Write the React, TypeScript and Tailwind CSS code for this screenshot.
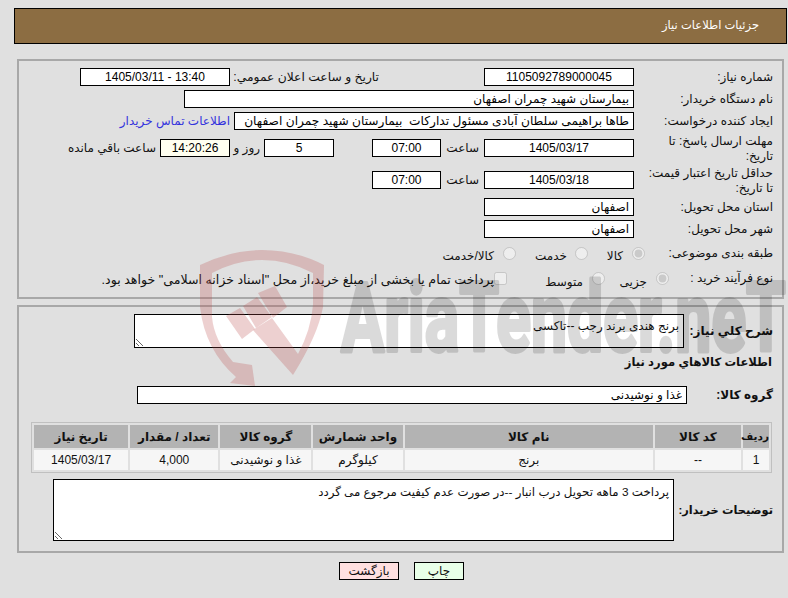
import React from 'react';

const boxClass = 'h-[18px] border border-black bg-white px-1 leading-[16px] text-black outline-none';

function Box({ value, width, center, bg, size = 'text-[12px]' }: { value: string; width: string; center?: boolean; bg?: string; size?: string }) {
  return (
    <input
      readOnly
      value={value}
      className={`${boxClass} ${size} ${width} ${center ? 'text-center' : 'text-right'} ${bg ?? ''} shrink-0`}
    />
  );
}

function Label({ children, width = 'w-[139px]', bold, nowrap, size }: { children: React.ReactNode; width?: string; bold?: boolean; nowrap?: boolean; size?: string }) {
  return (
    <div className={`${width} -mr-px shrink-0 pl-2 pt-px leading-[15px] ${size ?? ''} ${bold ? 'font-bold' : ''} ${nowrap ? 'whitespace-nowrap' : ''}`}>
      {children}
    </div>
  );
}

// site watermark, sits over the whole page with alpha
function Watermark() {
  return (
    <svg className="pointer-events-none absolute left-0 top-0 h-[598px] w-[788px]" viewBox="0 0 788 598">
      <g fill="#b94949" fillOpacity="0.26">
        <path
          fillRule="evenodd"
          d="M200 265 Q232 250 262 250 Q295 250 324 265 L323 307 Q318 335 293 375 L253 330 L272 318 L298 354 Q311 330 313 305 L313 273 Q288 260 262 260 Q236 260 212 273 L212 317 Q214 340 233 362 L252 365 L255 386 L230 383 L236 377 Q205 350 200 307 Z"
        />
        <path d="M226 316 L240 308 L255 329 L242 339 Z M243 306 L257 297 L272 317 L256 328 Z M258 293 L275 286 L287 307 L273 318 Z" />
      </g>
      <text
        x="341"
        y="351"
        textLength="445"
        lengthAdjust="spacingAndGlyphs"
        fill="#000"
        stroke="#000"
        strokeWidth="4"
        strokeLinejoin="round"
        opacity="0.14"
        style={{ fontFamily: 'Roboto, sans-serif', fontSize: 97, fontWeight: 700, paintOrder: 'stroke' }}
        direction="ltr"
      >
        AriaTender.neT
      </text>
    </svg>
  );
}

const head = ['رديف', 'کد کالا', 'نام کالا', 'واحد شمارش', 'گروه کالا', 'تعداد / مقدار', 'تاريخ نياز'];
const row = ['1', '--', 'برنج', 'کیلوگرم', 'غذا و نوشیدنی', '4,000', '1405/03/17'];
const colWidths = ['w-[26px]', 'w-[86px]', 'w-[248px]', 'w-[89px]', 'w-[91px]', 'w-[88px]', 'w-[94px]'];

export default function App() {
  return (
    <div
      dir="rtl"
      className="relative h-[598px] w-[788px] overflow-hidden bg-[#e0e0e0] text-[12px] text-[#111]"
      style={{ fontFamily: '"Liberation Sans", "DejaVu Sans", sans-serif' }}
    >
      <div className="flex flex-col pt-2">
        <div className="mr-px flex h-[36px] w-[773px] items-center border border-black bg-[#8c6d42] pr-[27px] text-[11.5px] text-white">
          جزئیات اطلاعات نیاز
        </div>

        <section className="mr-[4px] mt-[15px] h-[240px] w-[767px] border-2 border-[#a8a8a8] pr-[10px] pt-[7px]">
          <div className="flex h-[18px] items-center">
            <Label>شماره نیاز:</Label>
            <Box value="1105092789000045" width="w-[150px]" center />
            <div className="mr-[105px] w-[149px] whitespace-nowrap pt-px text-[12.3px] leading-[15px]">تاریخ و ساعت اعلان عمومي:</div>
            <Box value="13:40 - 1405/03/11" width="w-[150px]" center />
          </div>
          <div className="mt-1 flex h-[18px] items-center">
            <Label>نام دستگاه خریدار:</Label>
            <Box value="بیمارستان شهید چمران اصفهان" width="w-[450px]" />
          </div>
          <div className="mt-1 flex h-[18px] items-center">
            <Label>ایجاد کننده درخواست:</Label>
            <Box value="طاها براهیمی سلطان آبادی مسئول تدارکات  بیمارستان شهید چمران اصفهان" width="w-[400px]" size="text-[12.2px]" />
            <span className="mr-[4px] text-[#3333dd]">اطلاعات تماس خریدار</span>
          </div>
          <div className="mt-[4px] flex h-[28px] items-center">
            <Label>مهلت ارسال پاسخ: تا تاریخ:</Label>
            <Box value="1405/03/17" width="w-[150px]" center />
            <span className="mr-[5px] w-[38px]">ساعت</span>
            <Box value="07:00" width="w-[69px]" center />
            <div className="w-[38px]" />
            <Box value="5" width="w-[70px]" center />
            <span className="mr-1 w-[30px]">روز و</span>
            <Box value="14:20:26" width="w-[70px]" center bg="!bg-[#fffff0]" />
            <span className="mr-1">ساعت باقي مانده</span>
          </div>
          <div className="mt-[4px] flex h-[28px] items-center">
            <Label>حداقل تاریخ اعتبار قیمت: تا تاریخ:</Label>
            <Box value="1405/03/18" width="w-[150px]" center />
            <span className="mr-[5px] w-[38px]">ساعت</span>
            <Box value="07:00" width="w-[69px]" center />
          </div>
          <div className="mt-1 flex h-[18px] items-center">
            <Label>استان محل تحویل:</Label>
            <Box value="اصفهان" width="w-[150px]" />
          </div>
          <div className="mt-1 flex h-[18px] items-center">
            <Label>شهر محل تحویل:</Label>
            <Box value="اصفهان" width="w-[150px]" />
          </div>
          <div className="mt-[6px] flex h-[18px] items-center">
            <Label width="w-[128px]" nowrap>طبقه بندی موضوعی:</Label>
            <input type="radio" disabled defaultChecked name="kind" className="m-0 size-[13px] shrink-0" />
            <span className="mr-[9px] w-[20px] pt-[5px]">کالا</span>
            <input type="radio" disabled name="kind" className="m-0 mr-[15px] size-[13px] shrink-0" />
            <span className="mr-[8px] w-[40px] pt-[5px]">خدمت</span>
            <input type="radio" disabled name="kind" className="m-0 mr-[11px] size-[13px] shrink-0" />
            <span className="mr-[9px] pt-[5px]">کالا/خدمت</span>
          </div>
          <div className="mt-[7px] flex h-[18px] items-center">
            <Label width="w-[104px]" nowrap>نوع فرآیند خرید :</Label>
            <input type="radio" disabled defaultChecked name="proc" className="m-0 size-[13px] shrink-0" />
            <span className="mr-[9px] w-[30px] pt-[7px]">جزیی</span>
            <input type="radio" disabled name="proc" className="m-0 mr-[12px] size-[13px] shrink-0" />
            <span className="mr-[9px] w-[40px] pt-[7px]">متوسط</span>
            <input type="checkbox" disabled className="m-0 mr-[36px] size-[13px] shrink-0" />
            <span className="whitespace-nowrap pt-[5px] text-[12.6px]">پرداخت تمام یا بخشی از مبلغ خرید،از محل "اسناد خزانه اسلامی" خواهد بود.</span>
          </div>
        </section>

        <section className="mr-[4px] mt-[6px] h-[248px] w-[767px] border-2 border-[#a8a8a8] pr-[10px] pt-[7px]">
          <div className="flex h-[34px] items-center">
            <Label width="w-[89px]" bold nowrap>شرح کلي نياز:</Label>
            <textarea
              readOnly
              value="برنج هندی برند رجب --تاکسی"
              className="h-[34px] w-[550px] shrink-0 overflow-hidden border border-black bg-white px-1 pt-[3px] text-[12px] leading-[16px] outline-none"
            />
          </div>
          <div className="mt-[5px] text-[11.6px] font-bold leading-[18px]">اطلاعات کالاهاي مورد نياز</div>
          <div className="mt-[15px] flex h-[18px] items-center">
            <Label width="w-[86px]" bold nowrap>گروه کالا:</Label>
            <Box value="غذا و نوشیدنی" width="w-[550px]" />
          </div>
          <table className="mt-[18px] w-[741px] table-fixed border-separate border-spacing-[2px] border border-[#c0c0c0] text-center">
            <thead>
              <tr>
                {head.map((h, i) => (
                  <th key={h} className={`${colWidths[i]} h-[23px] bg-[#b3b3b3] p-0 font-bold ${i === 0 ? 'text-[10.5px]' : 'text-[12px]'}`}>{h}</th>
                ))}
              </tr>
            </thead>
            <tbody>
              <tr>
                {row.map((c, i) => (
                  <td key={i} className="h-[20px] bg-[#f6f6f6] p-0">{c}</td>
                ))}
              </tr>
            </tbody>
          </table>
          <div className="mt-[6px] flex items-center">
            <Label width="w-[99px]" bold nowrap size="text-[11.4px]">توضیحات خریدار:</Label>
            <textarea
              readOnly
              value="پرداخت 3 ماهه تحویل درب انبار --در صورت عدم کیفیت مرجوع می گردد"
              className="h-[62px] w-[621px] shrink-0 border border-black bg-white px-1 pt-1 text-[11.8px] leading-[16px] outline-none"
            />
          </div>
        </section>

        <div className="mr-[324px] mt-[9px] flex gap-[15px]">
          <button className="h-[18px] w-[50px] border border-black bg-[#e8ffe8] text-[12px] leading-none">چاپ</button>
          <button className="h-[18px] w-[60px] border border-black bg-[#ffe0e0] text-[12px] leading-none">بازگشت</button>
        </div>
      </div>
      <Watermark />
    </div>
  );
}
